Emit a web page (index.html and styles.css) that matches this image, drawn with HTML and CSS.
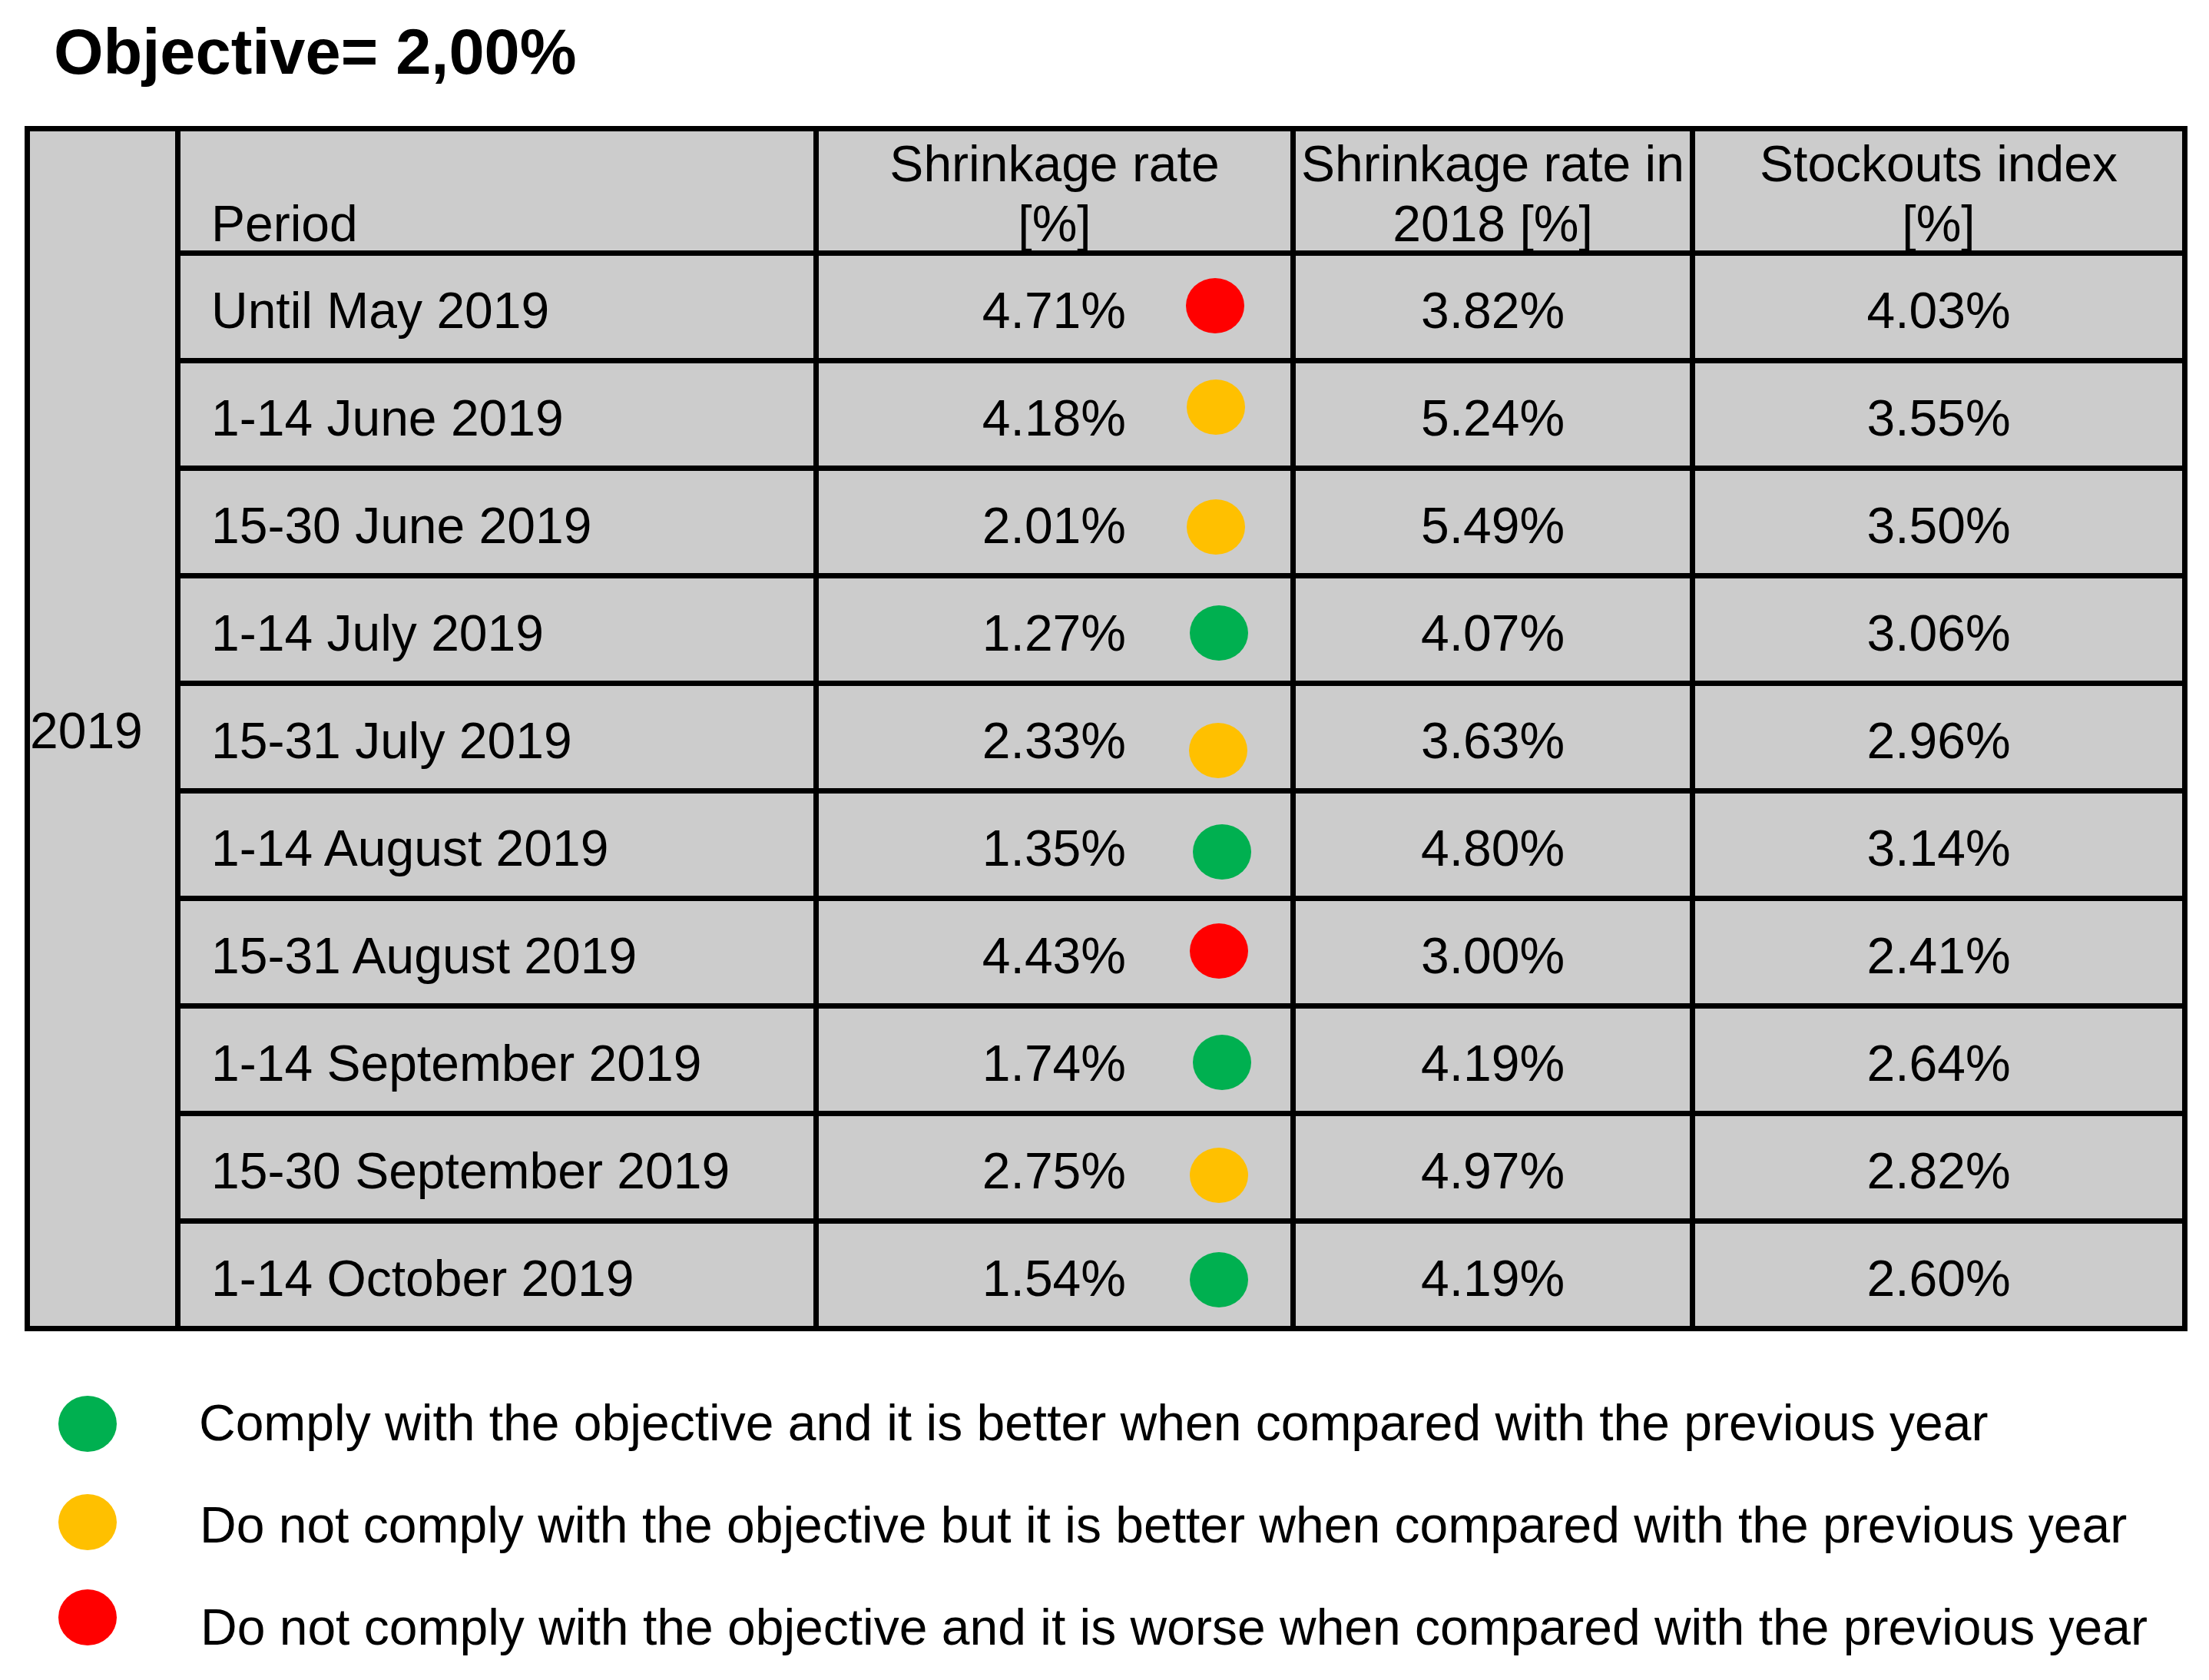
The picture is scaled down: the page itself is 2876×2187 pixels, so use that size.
FILE: index.html
```html
<!DOCTYPE html>
<html lang="en">
<head>
<meta charset="utf-8">
<title>Shrinkage rate 2019</title>
<link rel="stylesheet" href="styles.css">
</head>
<body>
<main class="page">
  <h1 class="title">Objective= 2,00%</h1>

  <table class="grid">
    <colgroup>
      <col class="c-year">
      <col class="c-period">
      <col class="c-rate">
      <col class="c-prev">
      <col class="c-stock">
    </colgroup>
    <tbody>
      <tr class="head-row">
        <td class="year" rowspan="11">2019</td>
        <th class="h-period"><div class="h-text">Period</div></th>
        <th><div class="h-text">Shrinkage rate<br>[%]</div></th>
        <th><div class="h-text">Shrinkage rate in<br>2018 [%]</div></th>
        <th class="h-last"><div class="h-text">Stockouts index<br>[%]</div></th>
      </tr>
      <tr class="row r1">
        <td class="period">Until May 2019</td>
        <td class="rate"><div class="rate-box"><span class="val">4.71%</span><span class="dot red"></span></div></td>
        <td class="num">3.82%</td>
        <td class="num last">4.03%</td>
      </tr>
      <tr class="row r2">
        <td class="period">1-14 June 2019</td>
        <td class="rate"><div class="rate-box"><span class="val">4.18%</span><span class="dot yellow"></span></div></td>
        <td class="num">5.24%</td>
        <td class="num last">3.55%</td>
      </tr>
      <tr class="row r3">
        <td class="period">15-30 June 2019</td>
        <td class="rate"><div class="rate-box"><span class="val">2.01%</span><span class="dot yellow"></span></div></td>
        <td class="num">5.49%</td>
        <td class="num last">3.50%</td>
      </tr>
      <tr class="row r4">
        <td class="period">1-14 July 2019</td>
        <td class="rate"><div class="rate-box"><span class="val">1.27%</span><span class="dot green"></span></div></td>
        <td class="num">4.07%</td>
        <td class="num last">3.06%</td>
      </tr>
      <tr class="row r5">
        <td class="period">15-31 July 2019</td>
        <td class="rate"><div class="rate-box"><span class="val">2.33%</span><span class="dot yellow"></span></div></td>
        <td class="num">3.63%</td>
        <td class="num last">2.96%</td>
      </tr>
      <tr class="row r6">
        <td class="period">1-14 August 2019</td>
        <td class="rate"><div class="rate-box"><span class="val">1.35%</span><span class="dot green"></span></div></td>
        <td class="num">4.80%</td>
        <td class="num last">3.14%</td>
      </tr>
      <tr class="row r7">
        <td class="period">15-31 August 2019</td>
        <td class="rate"><div class="rate-box"><span class="val">4.43%</span><span class="dot red"></span></div></td>
        <td class="num">3.00%</td>
        <td class="num last">2.41%</td>
      </tr>
      <tr class="row r8">
        <td class="period">1-14 September 2019</td>
        <td class="rate"><div class="rate-box"><span class="val">1.74%</span><span class="dot green"></span></div></td>
        <td class="num">4.19%</td>
        <td class="num last">2.64%</td>
      </tr>
      <tr class="row r9">
        <td class="period">15-30 September 2019</td>
        <td class="rate"><div class="rate-box"><span class="val">2.75%</span><span class="dot yellow"></span></div></td>
        <td class="num">4.97%</td>
        <td class="num last">2.82%</td>
      </tr>
      <tr class="row r10 final">
        <td class="period">1-14 October 2019</td>
        <td class="rate"><div class="rate-box"><span class="val">1.54%</span><span class="dot green"></span></div></td>
        <td class="num">4.19%</td>
        <td class="num last">2.60%</td>
      </tr>
    </tbody>
  </table>

  <ul class="legend">
    <li class="legend-item l1"><span class="ldot green"></span><span class="ltext">Comply with the objective and it is better when compared with the previous year</span></li>
    <li class="legend-item l2"><span class="ldot yellow"></span><span class="ltext">Do not comply with the objective but it is better when compared with the previous year</span></li>
    <li class="legend-item l3"><span class="ldot red"></span><span class="ltext">Do not comply with the objective and it is worse when compared with the previous year</span></li>
  </ul>
</main>
</body>
</html>
```

FILE: styles.css
```css
* {
  box-sizing: border-box;
}

html, body {
  margin: 0;
  padding: 0;
  background: #ffffff;
}

body {
  font-family: "Liberation Sans", Arial, sans-serif;
  color: #000000;
}

.page {
  width: 2876px;
  min-height: 2187px;
}

.title {
  margin: 0;
  padding: 18px 0 0 70px;
  font-size: 83px;
  line-height: 100px;
  font-weight: 700;
}

/* ---------- table ---------- */
.grid {
  margin: 46px 0 0 32px;
  width: 2816px;
  table-layout: fixed;
  border-collapse: separate;
  border-spacing: 0;
  border: 7px solid #000000;
  background: #cccccc;
  font-size: 66px;
}

.c-year { width: 196px; }
.c-period { width: 831px; }
.c-rate { width: 621px; }
.c-prev { width: 520px; }
.c-stock { width: 634px; }

.grid th,
.grid td {
  padding: 0;
  border-right: 7px solid #000000;
  border-bottom: 7px solid #000000;
}

.grid td.year {
  border-bottom: 0;
  vertical-align: middle;
  text-align: left;
  line-height: 76px;
  padding-top: 4px;
}

.grid .h-last,
.grid .last {
  border-right: 0;
}

.head-row {
  height: 162px;
}

.grid th {
  font-weight: 400;
  text-align: center;
  vertical-align: bottom;
  line-height: 78px;
}

.h-text {
  margin-bottom: -4px;
  white-space: nowrap;
}

.grid .h-period {
  text-align: left;
  padding-left: 40px;
}

.row {
  height: 140px;
}

.row.final {
  height: 133px;
}

.row.final td {
  border-bottom: 0;
}

.row td {
  padding-top: 8px;
  vertical-align: middle;
  line-height: 76px;
  white-space: nowrap;
}

.row td.period {
  text-align: left;
  padding-left: 40px;
}

.row td.num {
  text-align: center;
}

.rate-box {
  display: flex;
  align-items: center;
}

.val {
  width: 400px;
  text-align: right;
  flex: none;
}

.dot {
  flex: none;
  width: 76px;
  height: 72px;
  border-radius: 50%;
  margin-left: 78px;
}

.red { background: #ff0000; }
.yellow { background: #ffc000; }
.green { background: #00b050; }

/* hand-placed markers: small per-row nudges */
.r1 .dot { margin-left: 78px; margin-bottom: 11px; }
.r2 .dot { margin-left: 79px; margin-bottom: 27px; }
.r3 .dot { margin-left: 79px; margin-top: 5px; }
.r4 .dot { margin-left: 83px; margin-top: 1px; }
.r5 .dot { margin-left: 82px; margin-top: 27px; }
.r6 .dot { margin-left: 87px; margin-top: 11px; }
.r7 .dot { margin-left: 83px; margin-bottom: 12px; }
.r8 .dot { margin-left: 87px; margin-bottom: 1px; }
.r9 .dot { margin-left: 83px; margin-top: 13px; }
.r10 .dot { margin-left: 83px; margin-top: 5px; }

/* ---------- legend ---------- */
.legend {
  list-style: none;
  margin: 81px 0 0 0;
  padding: 0 0 0 76px;
  display: flex;
  flex-direction: column;
  gap: 57px;
}

.legend-item {
  display: flex;
  align-items: flex-start;
  height: 76px;
}

.ldot {
  flex: none;
  width: 76px;
  height: 73px;
  border-radius: 50%;
}

.ltext {
  margin-left: 107px;
  font-size: 66px;
  line-height: 76px;
  white-space: nowrap;
}

.l1 .ldot { margin-top: 3px; }
.l2 .ldot { margin-top: -2px; }
.l3 .ldot { margin-top: -11px; }
.l2 .ltext { margin-left: 108px; }
.l3 .ltext { margin-left: 109px; }
```
